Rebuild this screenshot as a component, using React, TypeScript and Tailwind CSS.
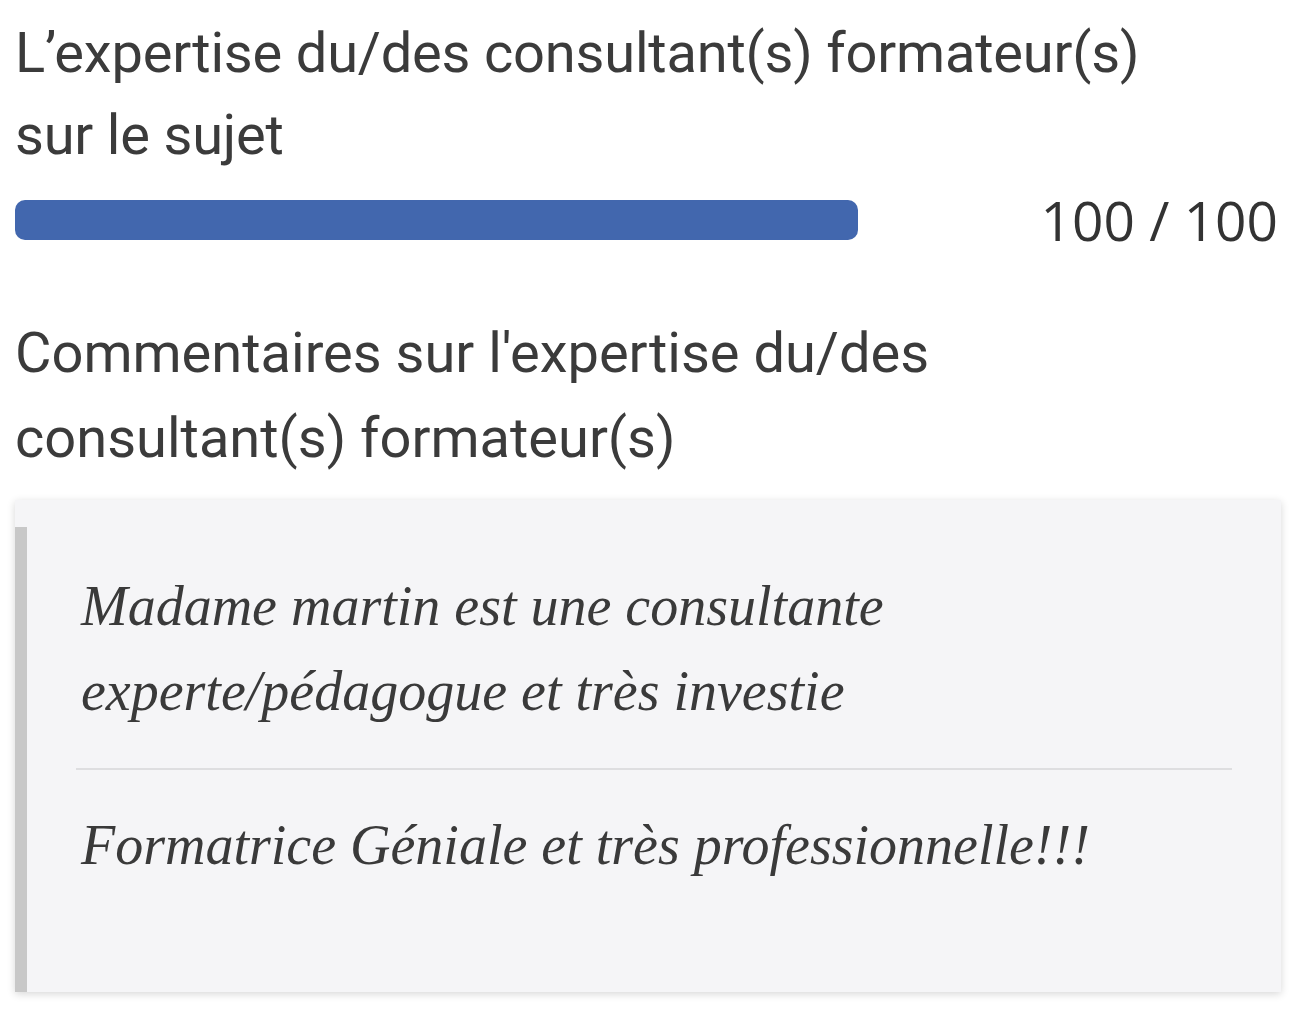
export default function App() {
  return (
    <div className="min-h-screen bg-white pl-[15px] pr-[15px] pt-[12px] text-[#3b3b3b]">
      <h2 className="font-['Roboto',sans-serif] text-[56px] leading-[82px] font-normal tracking-[-0.2px]">
        L’expertise du/des consultant(s) formateur(s)
        <br />
        sur le sujet
      </h2>

      <div className="mt-[14px] flex h-[60px] items-center justify-between">
        <div className="h-[40px] w-[843px] rounded-[10px] bg-[#4267ae]" />
        <span className="font-['Open_Sans',sans-serif] text-[55px] leading-[60px] text-[#333] mr-[3px]">
          100 / 100
        </span>
      </div>

      <h2 className="mt-[61px] font-['Roboto',sans-serif] text-[56px] leading-[85px] font-normal">
        Commentaires sur l'expertise du/des
        <br />
        consultant(s) formateur(s)
      </h2>

      <div className="mt-[19px] w-[1266px] bg-[#f5f5f7] pt-[27px] shadow-[0_2px_8px_rgba(0,0,0,0.16)]">
        <div className="h-[465px] border-l-[12px] border-[#c8c8c8] pl-[54px] pr-[49px] pt-[37px] font-['Liberation_Serif',serif] italic text-[56px] leading-[85px] text-[#3a3a3a]">
          <p>
            Madame martin est une consultante
            <br />
            experte/pédagogue et très investie
          </p>
          <div className="mt-[34px] -ml-[5px] h-[2px] bg-[#dedee0]" />
          <p className="mt-[33px]">Formatrice Géniale et très professionnelle!!!</p>
        </div>
      </div>
    </div>
  );
}
